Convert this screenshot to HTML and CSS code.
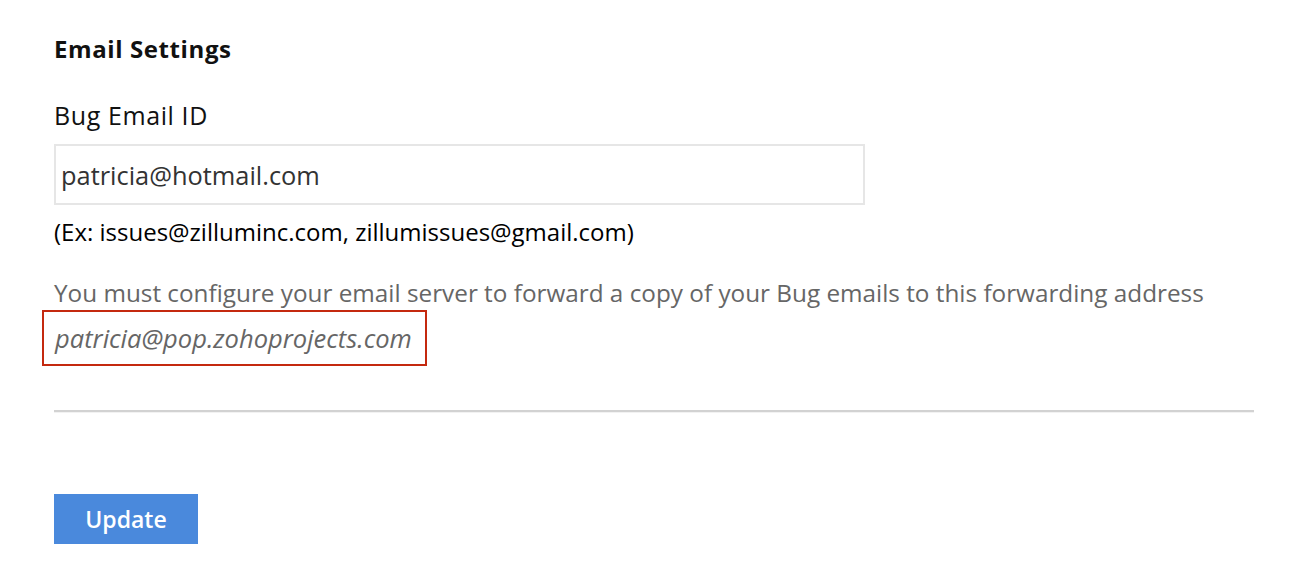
FILE: index.html
```html
<!DOCTYPE html>
<html lang="en">
<head>
  <meta charset="UTF-8">
  <meta name="viewport" content="width=device-width, initial-scale=1.0">
  <title>Email Settings</title>
  <link rel="stylesheet" href="styles.css">
</head>
<body>

  <!-- Email Settings Page -->
  <div class="settings">
    <h1 class="title">Email Settings</h1>

    <label class="field-label" for="bugEmail">Bug Email ID</label>
    <input type="text" id="bugEmail" class="field-input" value="patricia@hotmail.com">
    <div class="hint">(Ex: issues@zilluminc.com, zillumissues@gmail.com)</div>

    <p class="note">You must configure your email server to forward a copy of your Bug emails to this forwarding address</p>
    <div class="forward">
      <span class="forward-box">patricia@pop.zohoprojects.com</span>
    </div>

    <div class="divider"></div>

    <button class="button">Update</button>
  </div>

</body>
</html>
```

FILE: styles.css
```css
body {
  margin: 0;
  background-color: #fff;
  font-family: "Open Sans", Lato, sans-serif;
  color: #000;
}

/* Settings Container */
.settings {
  padding: 34px 0 0 54px;
  width: 1200px;
}

.title {
  margin: 0;
  font-size: 24px;
  line-height: 30px;
  font-weight: 700;
  letter-spacing: 0.6px;
  color: #111;
}

.field-label {
  display: block;
  margin-top: 36px;
  font-size: 25px;
  line-height: 30px;
  letter-spacing: 0.6px;
  color: #111;
}

.field-input {
  display: block;
  box-sizing: border-box;
  margin-top: 14px;
  width: 811px;
  height: 61px;
  padding: 0 5px;
  border: 2px solid #e6e6e6;
  font-family: inherit;
  font-size: 25.4px;
  color: #333;
  outline: none;
}

.hint {
  margin-top: 13px;
  font-size: 24px;
  line-height: 28px;
  color: #000;
}

.note {
  margin: 33px 0 0;
  font-size: 24.3px;
  line-height: 28px;
  color: #666;
}

.forward {
  margin-top: 3px;
}

.forward-box {
  display: inline-block;
  margin-left: -12px;
  padding: 0 13px 0 11px;
  height: 56px;
  line-height: 52px;
  box-sizing: border-box;
  border: 2px solid #c4290f;
  font-size: 25.5px;
  font-style: italic;
  color: #666;
}

.divider {
  margin-top: 44px;
  height: 2px;
  background-color: #d2d2d2;
  border-bottom: 1px solid #f2f2f2;
}

.button {
  display: block;
  margin-top: 81px;
  width: 144px;
  height: 50px;
  border: none;
  background-color: #4a89dc;
  color: #fff;
  font-family: inherit;
  font-size: 23px;
  font-weight: 600;
  cursor: pointer;
}
```
